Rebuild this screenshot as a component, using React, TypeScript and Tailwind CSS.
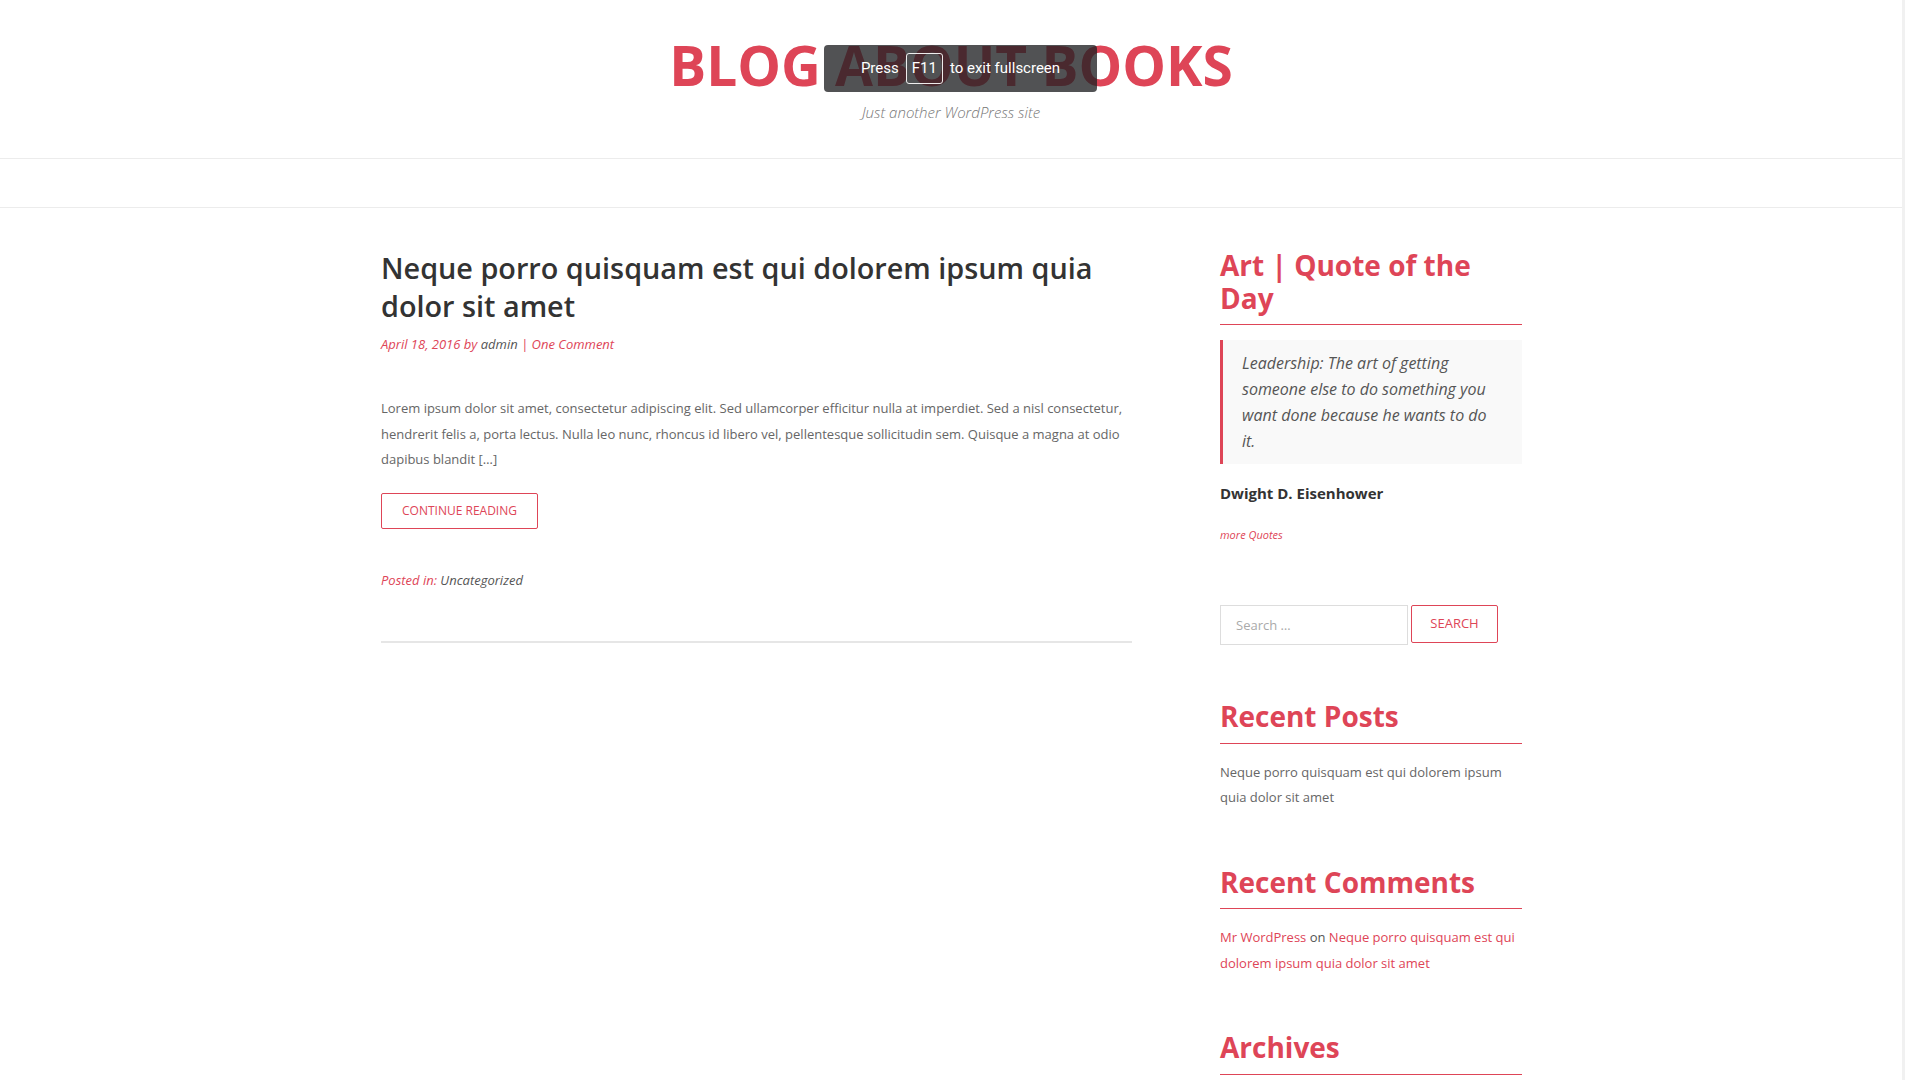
const red = 'text-[#de4557]'

function WidgetTitle({ children }: { children: React.ReactNode }) {
  return (
    <h3 className="text-[28px] font-bold leading-[32.5px] text-[#de4557] pb-[10px] border-b border-[#de4557]">
      {children}
    </h3>
  )
}

function FullscreenHint() {
  return (
    <div className="absolute left-[824px] top-[45px] h-[47px] w-[273px] rounded-[4px] bg-[#202124]/[0.78] flex items-center justify-center gap-[7px] text-white text-[15px] font-['Roboto',sans-serif]">
      <span>Press</span>
      <span className="h-[31px] px-[5px] flex items-center border border-white/90 rounded-[3px]">F11</span>
      <span>to exit fullscreen</span>
    </div>
  )
}

function Article() {
  return (
    <article className="w-[751px]">
      <h2 className="text-[28.8px] font-semibold leading-[38px] text-[#333]">
        Neque porro quisquam est qui dolorem ipsum quia dolor sit amet
      </h2>
      <div className="mt-[9px] text-[13px] italic leading-[20px]">
        <span className={red}>April 18, 2016 by </span>
        <span className="text-[#555]">admin</span>
        <span className={red}> | One Comment</span>
      </div>
      <p className="mt-[42px] text-[13px] leading-[25.5px] text-[#666]">
        Lorem ipsum dolor sit amet, consectetur adipiscing elit. Sed ullamcorper efficitur nulla at imperdiet. Sed a nisl consectetur,
        hendrerit felis a, porta lectus. Nulla leo nunc, rhoncus id libero vel, pellentesque sollicitudin sem. Quisque a magna at odio
        dapibus blandit [&hellip;]
      </p>
      <button className="mt-[20px] h-[36px] w-[157px] border border-[#de4557] rounded-[2px] text-[12px] uppercase text-[#de4557]">
        Continue reading
      </button>
      <div className="mt-[41px] text-[13px] italic leading-[20px]">
        <span className={red}>Posted in:</span> <span className="text-[#555]">Uncategorized</span>
      </div>
      <hr className="mt-[51px] border-0 border-t-2 border-[#e6e6e6]" />
    </article>
  )
}

function Sidebar() {
  return (
    <aside className="w-[302px] flex flex-col gap-[55px]">
      <section>
        <WidgetTitle>Art | Quote of the Day</WidgetTitle>
        <blockquote className="mt-[15px] border-l-[3px] border-[#de4557] bg-[#f9f9f9] pl-[19px] pr-[24px] py-[10px] text-[16px] italic leading-[26px] text-[#555]">
          Leadership: The art of getting someone else to do something you want done because he wants to do it.
        </blockquote>
        <div className="mt-[18px] text-[15px] font-bold leading-[22px] text-[#333]">Dwight D. Eisenhower</div>
        <div className="mt-[23px] text-[11px] italic leading-[16px] text-[#de4557]">more Quotes</div>
      </section>
      <form className="flex items-start gap-[3px] mt-[7px]">
        <input
          placeholder="Search …"
          className="h-[40px] w-[188px] border border-[#ddd] px-[15px] text-[13px] placeholder:text-[#aaa] outline-none"
        />
        <button type="button" className="h-[38px] w-[87px] border border-[#de4557] rounded-[2px] text-[13px] uppercase text-[#de4557]">
          Search
        </button>
      </form>
      <section>
        <WidgetTitle>Recent Posts</WidgetTitle>
        <p className="mt-[16px] text-[13px] leading-[25.5px] text-[#666]">
          Neque porro quisquam est qui dolorem ipsum quia dolor sit amet
        </p>
      </section>
      <section>
        <WidgetTitle>Recent Comments</WidgetTitle>
        <p className="mt-[16px] text-[13px] leading-[25.5px] text-[#de4557]">
          Mr WordPress <span className="text-[#555]">on</span> Neque porro quisquam est qui dolorem ipsum quia dolor sit amet
        </p>
      </section>
      <section>
        <WidgetTitle>Archives</WidgetTitle>
        <ul className="mt-[16px] text-[13px] leading-[25.5px] text-[#de4557]">
          <li>April 2016</li>
        </ul>
      </section>
    </aside>
  )
}

export default function App() {
  return (
    <div className="relative h-[1080px] overflow-hidden flex bg-white font-['Open_Sans',sans-serif]">
      <div className="flex-1 min-w-0">
        <header className="pt-[33px] pb-[36px] border-b border-[#ececec] text-center">
          <h1 className="text-[55px] font-bold leading-[64px] text-[#de4557]">BLOG ABOUT BOOKS</h1>
          <p className="mt-[5px] text-[15px] italic font-light leading-[20px] text-[#777]">Just another WordPress site</p>
        </header>
        <nav className="h-[49px] border-b border-[#ececec]" />
        <main className="w-[1141px] ml-[381px] pt-[41px] flex justify-between items-start">
          <Article />
          <Sidebar />
        </main>
      </div>
      <div className="w-[3px] bg-[#f1f1f1]" />
      <FullscreenHint />
    </div>
  )
}
